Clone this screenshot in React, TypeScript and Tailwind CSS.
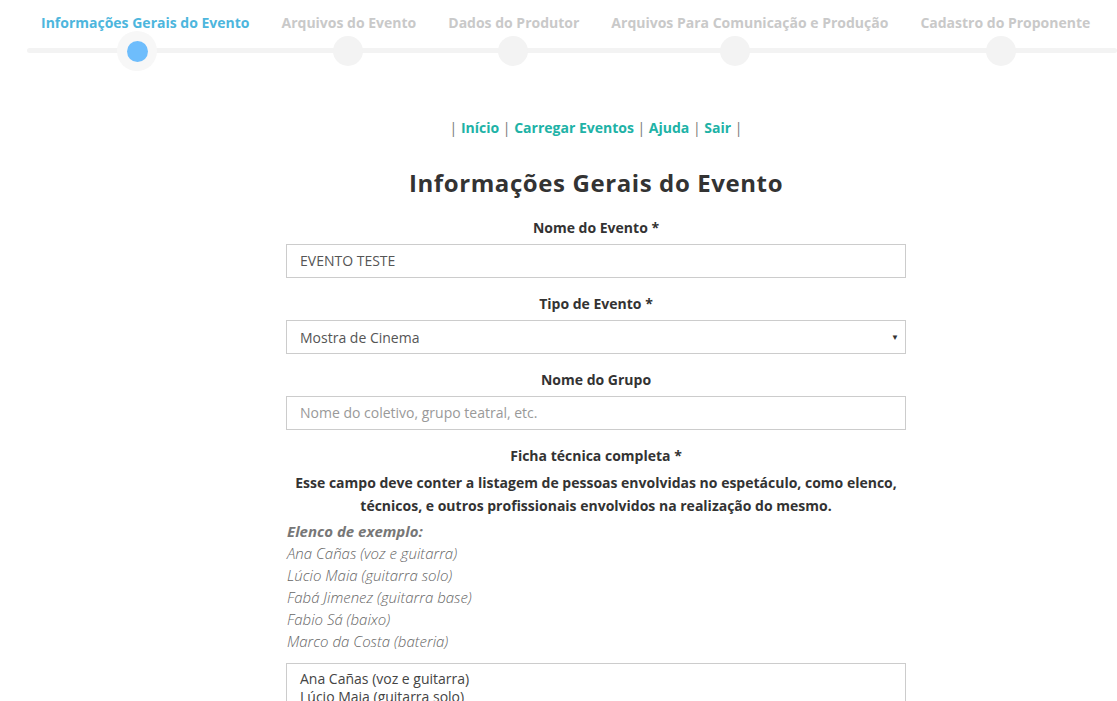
const steps = [
  { label: 'Informações Gerais do Evento', active: true },
  { label: 'Arquivos do Evento' },
  { label: 'Dados do Produtor' },
  { label: 'Arquivos Para Comunicação e Produção' },
  { label: 'Cadastro do Proponente' },
];

const dots = [
  { left: 'left-[333px]' },
  { left: 'left-[498px]' },
  { left: 'left-[720px]' },
  { left: 'left-[986px]' },
];

const elenco = [
  'Ana Cañas (voz e guitarra)',
  'Lúcio Maia (guitarra solo)',
  'Fabá Jimenez (guitarra base)',
  'Fabio Sá (baixo)',
  'Marco da Costa (bateria)',
];

function Stepper() {
  return (
    <div className="relative h-[74px] font-['Open_Sans',sans-serif]">
      <div className="flex gap-[32px] pl-[41px] pt-[13px] text-[14px] font-bold leading-5 whitespace-nowrap">
        {steps.map((s) => (
          <span key={s.label} className={s.active ? 'text-[#4db6dd]' : 'text-[#c9c9c9]'}>
            {s.label}
          </span>
        ))}
      </div>
      <div className="absolute left-[27px] right-0 top-[48px] h-[5px] rounded-full bg-[#f3f3f3]" />
      <div className="absolute left-[117px] top-[31px] h-[40px] w-[40px] rounded-full bg-[#f7f7f7] flex items-center justify-center">
        <div className="h-[21px] w-[21px] rounded-full bg-[#6ebdfc]" />
      </div>
      {dots.map((d, i) => (
        <div key={i} className={`absolute top-[36px] h-[30px] w-[30px] rounded-full bg-[#f3f3f3] ${d.left}`} />
      ))}
    </div>
  );
}

function Label({ children }: { children: React.ReactNode }) {
  return <p className="text-center text-[14px] font-bold leading-5 text-[#333]">{children}</p>;
}

export default function App() {
  return (
    <div className="h-[701px] overflow-hidden bg-white font-['Open_Sans',sans-serif] text-[#333]">
      <Stepper />
      <div className="flex justify-center pl-[75px]">
        <div className="w-[620px]">
          <p className="mt-[44px] text-center text-[14px] leading-5 text-[#777]">
            |{' '}
            <span className="font-bold text-[#20b2a6]">Início</span> |{' '}
            <span className="font-bold text-[#20b2a6]">Carregar Eventos</span> |{' '}
            <span className="font-bold text-[#20b2a6]">Ajuda</span> |{' '}
            <span className="font-bold text-[#20b2a6]">Sair</span> |
          </p>
          <h1 className="mt-[31px] text-center text-[24px] font-bold leading-7 tracking-[0.6px] text-[#333]">
            Informações Gerais do Evento
          </h1>
          <div className="mt-[21px]">
            <Label>Nome do Evento *</Label>
            <div className="mt-[6px] h-[34px] border border-[#ccc] px-[13px] text-[14px] leading-[32px] text-[#555]">
              EVENTO TESTE
            </div>
          </div>
          <div className="mt-[16px]">
            <Label>Tipo de Evento *</Label>
            <div className="mt-[6px] flex h-[34px] items-center justify-between border border-[#ccc] pl-[13px] pr-[6px] text-[14px] text-[#555]">
              <span>Mostra de Cinema</span>
              <span className="text-[8px] text-[#333]">▼</span>
            </div>
          </div>
          <div className="mt-[16px]">
            <Label>Nome do Grupo</Label>
            <div className="mt-[6px] h-[34px] border border-[#ccc] px-[13px] text-[14px] leading-[32px] text-[#999]">
              Nome do coletivo, grupo teatral, etc.
            </div>
          </div>
          <div className="mt-[16px]">
            <Label>Ficha técnica completa *</Label>
            <p className="mt-[5px] text-center text-[14px] font-bold leading-[23px] text-[#333]">
              Esse campo deve conter a listagem de pessoas envolvidas no espetáculo, como elenco,
              técnicos, e outros profissionais envolvidos na realização do mesmo.
            </p>
            <div className="mt-[3px] pl-[1px] text-[15px] font-light italic leading-[22px] text-[#666]">
              <p className="font-bold text-[#777]">Elenco de exemplo:</p>
              {elenco.map((e) => (
                <p key={e}>{e}</p>
              ))}
            </div>
            <div className="mt-[11px] h-[80px] overflow-hidden border border-[#ccc] px-[13px] pt-[6px] text-[14px] leading-[18px] text-[#444]">
              {elenco.map((e) => (
                <p key={e}>{e}</p>
              ))}
            </div>
          </div>
        </div>
      </div>
    </div>
  );
}
